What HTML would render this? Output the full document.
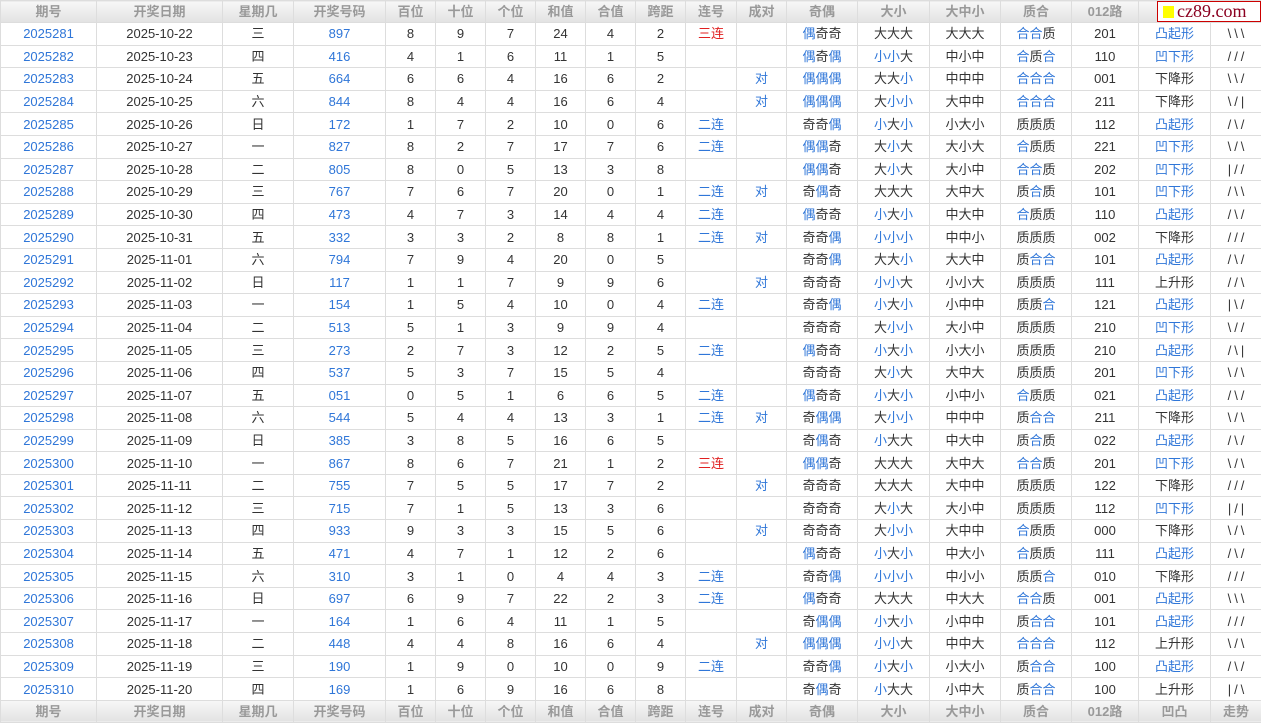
<!DOCTYPE html>
<html><head><meta charset="utf-8"><style>
body{margin:0;width:1261px;height:721px;overflow:hidden;background:#fff;font-family:"Liberation Sans","Noto Sans CJK SC",sans-serif;}
table{border-collapse:collapse;table-layout:fixed;width:1261px;position:absolute;left:0;top:0}
td,th{border:1px solid #ddd;text-align:center;font-size:13px;color:#333;padding:0;height:21.6px;line-height:21px;white-space:nowrap;overflow:hidden}
td:last-child{letter-spacing:3px;padding-left:3px}
th{background:linear-gradient(#f7f7f7,#e2e2e2);color:#999;font-weight:bold;height:20.5px}
i{font-style:normal;color:#2f76d8}
.r{color:#e02020}
#logo{position:absolute;left:1157px;top:1px;width:102px;height:19px;border:1px solid #c00;background:#fff;font-family:"Liberation Serif",serif;font-size:18px;color:#8b0020;line-height:19px}
#logo span{display:inline-block;width:11px;height:12px;background:#ff0;margin:0 3px 0 5px;vertical-align:-1px}
</style></head><body>
<table>
<colgroup><col width="96"><col width="126"><col width="71"><col width="92"><col width="50"><col width="50"><col width="50"><col width="50"><col width="50"><col width="50"><col width="51"><col width="50"><col width="71"><col width="72"><col width="71"><col width="71"><col width="67"><col width="72"><col width="51"></colgroup>
<tr><th>期号</th><th>开奖日期</th><th>星期几</th><th>开奖号码</th><th>百位</th><th>十位</th><th>个位</th><th>和值</th><th>合值</th><th>跨距</th><th>连号</th><th>成对</th><th>奇偶</th><th>大小</th><th>大中小</th><th>质合</th><th>012路</th><th>凹凸</th><th>走势</th></tr>
<tr><td><i>2025281</i></td><td>2025-10-22</td><td>三</td><td><i>897</i></td><td>8</td><td>9</td><td>7</td><td>24</td><td>4</td><td>2</td><td class="r">三连</td><td></td><td><i>偶</i>奇奇</td><td>大大大</td><td>大大大</td><td><i>合合</i>质</td><td>201</td><td><i>凸起形</i></td><td>\\\</td></tr>
<tr><td><i>2025282</i></td><td>2025-10-23</td><td>四</td><td><i>416</i></td><td>4</td><td>1</td><td>6</td><td>11</td><td>1</td><td>5</td><td></td><td></td><td><i>偶</i>奇<i>偶</i></td><td><i>小小</i>大</td><td>中小中</td><td><i>合</i>质<i>合</i></td><td>110</td><td><i>凹下形</i></td><td>///</td></tr>
<tr><td><i>2025283</i></td><td>2025-10-24</td><td>五</td><td><i>664</i></td><td>6</td><td>6</td><td>4</td><td>16</td><td>6</td><td>2</td><td></td><td><i>对</i></td><td><i>偶偶偶</i></td><td>大大<i>小</i></td><td>中中中</td><td><i>合合合</i></td><td>001</td><td>下降形</td><td>\\/</td></tr>
<tr><td><i>2025284</i></td><td>2025-10-25</td><td>六</td><td><i>844</i></td><td>8</td><td>4</td><td>4</td><td>16</td><td>6</td><td>4</td><td></td><td><i>对</i></td><td><i>偶偶偶</i></td><td>大<i>小小</i></td><td>大中中</td><td><i>合合合</i></td><td>211</td><td>下降形</td><td>\/|</td></tr>
<tr><td><i>2025285</i></td><td>2025-10-26</td><td>日</td><td><i>172</i></td><td>1</td><td>7</td><td>2</td><td>10</td><td>0</td><td>6</td><td><i>二连</i></td><td></td><td>奇奇<i>偶</i></td><td><i>小</i>大<i>小</i></td><td>小大小</td><td>质质质</td><td>112</td><td><i>凸起形</i></td><td>/\/</td></tr>
<tr><td><i>2025286</i></td><td>2025-10-27</td><td>一</td><td><i>827</i></td><td>8</td><td>2</td><td>7</td><td>17</td><td>7</td><td>6</td><td><i>二连</i></td><td></td><td><i>偶偶</i>奇</td><td>大<i>小</i>大</td><td>大小大</td><td><i>合</i>质质</td><td>221</td><td><i>凹下形</i></td><td>\/\</td></tr>
<tr><td><i>2025287</i></td><td>2025-10-28</td><td>二</td><td><i>805</i></td><td>8</td><td>0</td><td>5</td><td>13</td><td>3</td><td>8</td><td></td><td></td><td><i>偶偶</i>奇</td><td>大<i>小</i>大</td><td>大小中</td><td><i>合合</i>质</td><td>202</td><td><i>凹下形</i></td><td>|//</td></tr>
<tr><td><i>2025288</i></td><td>2025-10-29</td><td>三</td><td><i>767</i></td><td>7</td><td>6</td><td>7</td><td>20</td><td>0</td><td>1</td><td><i>二连</i></td><td><i>对</i></td><td>奇<i>偶</i>奇</td><td>大大大</td><td>大中大</td><td>质<i>合</i>质</td><td>101</td><td><i>凹下形</i></td><td>/\\</td></tr>
<tr><td><i>2025289</i></td><td>2025-10-30</td><td>四</td><td><i>473</i></td><td>4</td><td>7</td><td>3</td><td>14</td><td>4</td><td>4</td><td><i>二连</i></td><td></td><td><i>偶</i>奇奇</td><td><i>小</i>大<i>小</i></td><td>中大中</td><td><i>合</i>质质</td><td>110</td><td><i>凸起形</i></td><td>/\/</td></tr>
<tr><td><i>2025290</i></td><td>2025-10-31</td><td>五</td><td><i>332</i></td><td>3</td><td>3</td><td>2</td><td>8</td><td>8</td><td>1</td><td><i>二连</i></td><td><i>对</i></td><td>奇奇<i>偶</i></td><td><i>小小小</i></td><td>中中小</td><td>质质质</td><td>002</td><td>下降形</td><td>///</td></tr>
<tr><td><i>2025291</i></td><td>2025-11-01</td><td>六</td><td><i>794</i></td><td>7</td><td>9</td><td>4</td><td>20</td><td>0</td><td>5</td><td></td><td></td><td>奇奇<i>偶</i></td><td>大大<i>小</i></td><td>大大中</td><td>质<i>合合</i></td><td>101</td><td><i>凸起形</i></td><td>/\/</td></tr>
<tr><td><i>2025292</i></td><td>2025-11-02</td><td>日</td><td><i>117</i></td><td>1</td><td>1</td><td>7</td><td>9</td><td>9</td><td>6</td><td></td><td><i>对</i></td><td>奇奇奇</td><td><i>小小</i>大</td><td>小小大</td><td>质质质</td><td>111</td><td>上升形</td><td>//\</td></tr>
<tr><td><i>2025293</i></td><td>2025-11-03</td><td>一</td><td><i>154</i></td><td>1</td><td>5</td><td>4</td><td>10</td><td>0</td><td>4</td><td><i>二连</i></td><td></td><td>奇奇<i>偶</i></td><td><i>小</i>大<i>小</i></td><td>小中中</td><td>质质<i>合</i></td><td>121</td><td><i>凸起形</i></td><td>|\/</td></tr>
<tr><td><i>2025294</i></td><td>2025-11-04</td><td>二</td><td><i>513</i></td><td>5</td><td>1</td><td>3</td><td>9</td><td>9</td><td>4</td><td></td><td></td><td>奇奇奇</td><td>大<i>小小</i></td><td>大小中</td><td>质质质</td><td>210</td><td><i>凹下形</i></td><td>\//</td></tr>
<tr><td><i>2025295</i></td><td>2025-11-05</td><td>三</td><td><i>273</i></td><td>2</td><td>7</td><td>3</td><td>12</td><td>2</td><td>5</td><td><i>二连</i></td><td></td><td><i>偶</i>奇奇</td><td><i>小</i>大<i>小</i></td><td>小大小</td><td>质质质</td><td>210</td><td><i>凸起形</i></td><td>/\|</td></tr>
<tr><td><i>2025296</i></td><td>2025-11-06</td><td>四</td><td><i>537</i></td><td>5</td><td>3</td><td>7</td><td>15</td><td>5</td><td>4</td><td></td><td></td><td>奇奇奇</td><td>大<i>小</i>大</td><td>大中大</td><td>质质质</td><td>201</td><td><i>凹下形</i></td><td>\/\</td></tr>
<tr><td><i>2025297</i></td><td>2025-11-07</td><td>五</td><td><i>051</i></td><td>0</td><td>5</td><td>1</td><td>6</td><td>6</td><td>5</td><td><i>二连</i></td><td></td><td><i>偶</i>奇奇</td><td><i>小</i>大<i>小</i></td><td>小中小</td><td><i>合</i>质质</td><td>021</td><td><i>凸起形</i></td><td>/\/</td></tr>
<tr><td><i>2025298</i></td><td>2025-11-08</td><td>六</td><td><i>544</i></td><td>5</td><td>4</td><td>4</td><td>13</td><td>3</td><td>1</td><td><i>二连</i></td><td><i>对</i></td><td>奇<i>偶偶</i></td><td>大<i>小小</i></td><td>中中中</td><td>质<i>合合</i></td><td>211</td><td>下降形</td><td>\/\</td></tr>
<tr><td><i>2025299</i></td><td>2025-11-09</td><td>日</td><td><i>385</i></td><td>3</td><td>8</td><td>5</td><td>16</td><td>6</td><td>5</td><td></td><td></td><td>奇<i>偶</i>奇</td><td><i>小</i>大大</td><td>中大中</td><td>质<i>合</i>质</td><td>022</td><td><i>凸起形</i></td><td>/\/</td></tr>
<tr><td><i>2025300</i></td><td>2025-11-10</td><td>一</td><td><i>867</i></td><td>8</td><td>6</td><td>7</td><td>21</td><td>1</td><td>2</td><td class="r">三连</td><td></td><td><i>偶偶</i>奇</td><td>大大大</td><td>大中大</td><td><i>合合</i>质</td><td>201</td><td><i>凹下形</i></td><td>\/\</td></tr>
<tr><td><i>2025301</i></td><td>2025-11-11</td><td>二</td><td><i>755</i></td><td>7</td><td>5</td><td>5</td><td>17</td><td>7</td><td>2</td><td></td><td><i>对</i></td><td>奇奇奇</td><td>大大大</td><td>大中中</td><td>质质质</td><td>122</td><td>下降形</td><td>///</td></tr>
<tr><td><i>2025302</i></td><td>2025-11-12</td><td>三</td><td><i>715</i></td><td>7</td><td>1</td><td>5</td><td>13</td><td>3</td><td>6</td><td></td><td></td><td>奇奇奇</td><td>大<i>小</i>大</td><td>大小中</td><td>质质质</td><td>112</td><td><i>凹下形</i></td><td>|/|</td></tr>
<tr><td><i>2025303</i></td><td>2025-11-13</td><td>四</td><td><i>933</i></td><td>9</td><td>3</td><td>3</td><td>15</td><td>5</td><td>6</td><td></td><td><i>对</i></td><td>奇奇奇</td><td>大<i>小小</i></td><td>大中中</td><td><i>合</i>质质</td><td>000</td><td>下降形</td><td>\/\</td></tr>
<tr><td><i>2025304</i></td><td>2025-11-14</td><td>五</td><td><i>471</i></td><td>4</td><td>7</td><td>1</td><td>12</td><td>2</td><td>6</td><td></td><td></td><td><i>偶</i>奇奇</td><td><i>小</i>大<i>小</i></td><td>中大小</td><td><i>合</i>质质</td><td>111</td><td><i>凸起形</i></td><td>/\/</td></tr>
<tr><td><i>2025305</i></td><td>2025-11-15</td><td>六</td><td><i>310</i></td><td>3</td><td>1</td><td>0</td><td>4</td><td>4</td><td>3</td><td><i>二连</i></td><td></td><td>奇奇<i>偶</i></td><td><i>小小小</i></td><td>中小小</td><td>质质<i>合</i></td><td>010</td><td>下降形</td><td>///</td></tr>
<tr><td><i>2025306</i></td><td>2025-11-16</td><td>日</td><td><i>697</i></td><td>6</td><td>9</td><td>7</td><td>22</td><td>2</td><td>3</td><td><i>二连</i></td><td></td><td><i>偶</i>奇奇</td><td>大大大</td><td>中大大</td><td><i>合合</i>质</td><td>001</td><td><i>凸起形</i></td><td>\\\</td></tr>
<tr><td><i>2025307</i></td><td>2025-11-17</td><td>一</td><td><i>164</i></td><td>1</td><td>6</td><td>4</td><td>11</td><td>1</td><td>5</td><td></td><td></td><td>奇<i>偶偶</i></td><td><i>小</i>大<i>小</i></td><td>小中中</td><td>质<i>合合</i></td><td>101</td><td><i>凸起形</i></td><td>///</td></tr>
<tr><td><i>2025308</i></td><td>2025-11-18</td><td>二</td><td><i>448</i></td><td>4</td><td>4</td><td>8</td><td>16</td><td>6</td><td>4</td><td></td><td><i>对</i></td><td><i>偶偶偶</i></td><td><i>小小</i>大</td><td>中中大</td><td><i>合合合</i></td><td>112</td><td>上升形</td><td>\/\</td></tr>
<tr><td><i>2025309</i></td><td>2025-11-19</td><td>三</td><td><i>190</i></td><td>1</td><td>9</td><td>0</td><td>10</td><td>0</td><td>9</td><td><i>二连</i></td><td></td><td>奇奇<i>偶</i></td><td><i>小</i>大<i>小</i></td><td>小大小</td><td>质<i>合合</i></td><td>100</td><td><i>凸起形</i></td><td>/\/</td></tr>
<tr><td><i>2025310</i></td><td>2025-11-20</td><td>四</td><td><i>169</i></td><td>1</td><td>6</td><td>9</td><td>16</td><td>6</td><td>8</td><td></td><td></td><td>奇<i>偶</i>奇</td><td><i>小</i>大大</td><td>小中大</td><td>质<i>合合</i></td><td>100</td><td>上升形</td><td>|/\</td></tr>
<tr><th>期号</th><th>开奖日期</th><th>星期几</th><th>开奖号码</th><th>百位</th><th>十位</th><th>个位</th><th>和值</th><th>合值</th><th>跨距</th><th>连号</th><th>成对</th><th>奇偶</th><th>大小</th><th>大中小</th><th>质合</th><th>012路</th><th>凹凸</th><th>走势</th></tr>
</table>
<div id="logo"><span></span>cz89.com</div>
</body></html>
